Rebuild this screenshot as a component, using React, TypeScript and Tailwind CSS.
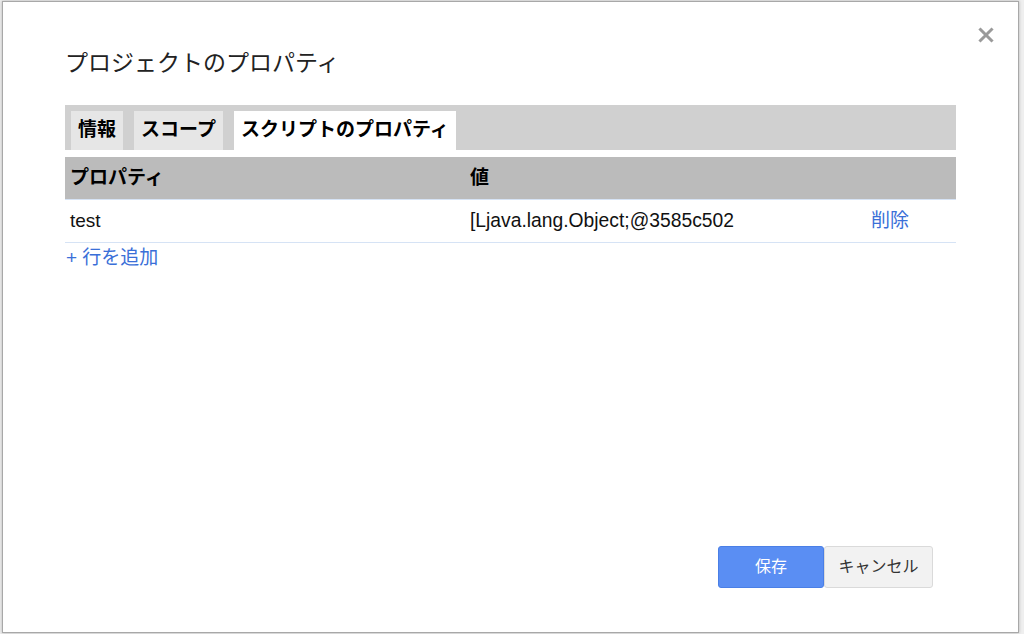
import React from "react";

const font = { fontFamily: '"Liberation Sans", "Noto Sans CJK JP", sans-serif' };

export default function App() {
  const tabs = [
    { label: "情報", active: false },
    { label: "スコープ", active: false },
    { label: "スクリプトのプロパティ", active: true },
  ];

  return (
    <div className="min-h-screen bg-[#efefef] pt-[1px]" style={font}>
      <div className="relative ml-[2px] w-[1017px] h-[632px] bg-white border border-[#a8a8a8] shadow-[0_0_3px_rgba(0,0,0,0.25)] flex flex-col pl-[62px] pr-[62px]">
        {/* close */}
        <button className="absolute top-[25px] right-[24px] w-4 h-4 text-[#9a9a9a]">
          <svg viewBox="0 0 16 16" className="w-4 h-4">
            <path d="M2.5 2.5 L13.5 13.5 M13.5 2.5 L2.5 13.5" stroke="currentColor" strokeWidth="3" strokeLinecap="square" />
          </svg>
        </button>

        <h1 className="mt-[46px] text-[23px] leading-[30px] text-[#222] font-normal">
          プロジェクトのプロパティ
        </h1>

        {/* tabs */}
        <div className="mt-[27px] h-[45px] bg-[#d0d0d0] flex items-end gap-[11px] pl-[6px]">
          {tabs.map((t) => (
            <div
              key={t.label}
              className={
                "h-[39px] px-[7px] flex items-center text-[19px] font-bold text-black " +
                (t.active ? "bg-white" : "bg-[#e6e6e6]")
              }
            >
              {t.label}
            </div>
          ))}
        </div>

        {/* table */}
        <div className="mt-[7px]">
          <div className="grid grid-cols-[400px_401px_1fr] h-[43px] bg-[#bbbbbb] border-b border-[#d6e3f5] items-center text-[19px] font-bold text-black">
            <div className="pl-[5px]">プロパティ</div>
            <div className="pl-[5px]">値</div>
            <div />
          </div>
          <div className="grid grid-cols-[400px_401px_1fr] h-[43px] border-b border-[#d6e3f5] items-center text-[19px] text-[#111]">
            <div className="pl-[5px]">test</div>
            <div className="pl-[5px] text-[19.3px]">[Ljava.lang.Object;@3585c502</div>
            <div className="pl-[5px] text-[#3a6fd8] cursor-pointer">削除</div>
          </div>
          <div className="pt-[3px] text-[19px] leading-[24px] text-[#3a6fd8] pl-[1px]">+ 行を追加</div>
        </div>

        {/* buttons */}
        <div className="mt-auto mb-[44px] mr-[23px] flex justify-end">
          <button className="w-[106px] h-[42px] bg-[#5a8ef3] border border-[#4a7fe6] rounded-[3px] text-white text-[16px]">
            保存
          </button>
          <button className="w-[109px] h-[42px] bg-[#f2f2f2] border border-[#dadada] rounded-[3px] text-[#333] text-[16px]">
            キャンセル
          </button>
        </div>
      </div>
    </div>
  );
}
